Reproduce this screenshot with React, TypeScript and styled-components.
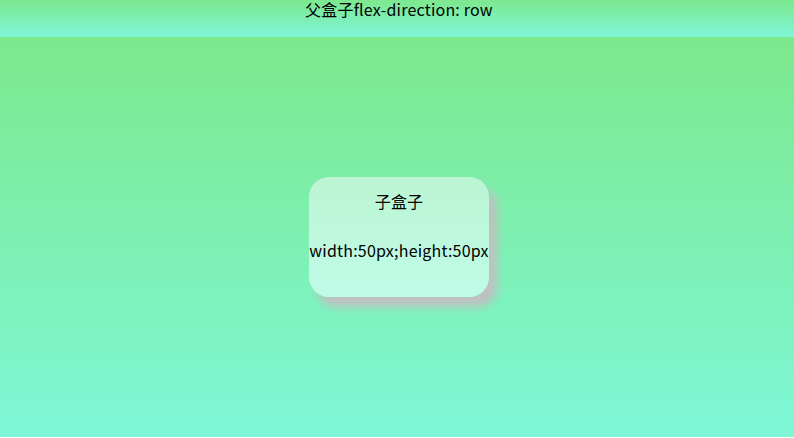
import styled, { createGlobalStyle } from 'styled-components';

const GlobalStyle = createGlobalStyle`
  html, body {
    margin: 0;
    padding: 0;
    background: #ffffff;
  }
  body {
    font-family: "Noto Sans CJK SC", "Noto Sans", sans-serif;
    color: #000;
  }
`;

export default function App() {
  return (
    <>
      <GlobalStyle />
      <Header>父盒子flex-direction: row</Header>
      <Parent>
        <Child>
          <Label>子盒子</Label>
          <Label>width:50px;height:50px</Label>
        </Child>
      </Parent>
    </>
  );
}

const Header = styled.div`
  height: 37px;
  box-sizing: border-box;
  padding-top: 1px;
  padding-left: 4px;
  font-size: 16px;
  line-height: 16px;
  letter-spacing: 0.2px;
  text-align: center;
  background: linear-gradient(to bottom, #7de88e, #7ef6d8);
`;

const Parent = styled.div`
  height: 400px;
  display: flex;
  flex-direction: row;
  justify-content: center;
  align-items: center;
  background: linear-gradient(to bottom, #7de88c, #7ef7d7);
`;

const Child = styled.div`
  width: 180px;
  height: 120px;
  margin-left: 4px;
  box-sizing: border-box;
  padding-top: 14px;
  display: flex;
  flex-direction: column;
  align-items: center;
  gap: 28px;
  border-radius: 20px;
  background: linear-gradient(to bottom, #bcf5d3, #bffbe8);
  box-shadow: 8px 10px 8px #c0c0c0;
`;

const Label = styled.div`
  font-size: 16px;
  line-height: 21px;
  letter-spacing: 0.2px;
  white-space: nowrap;
`;
